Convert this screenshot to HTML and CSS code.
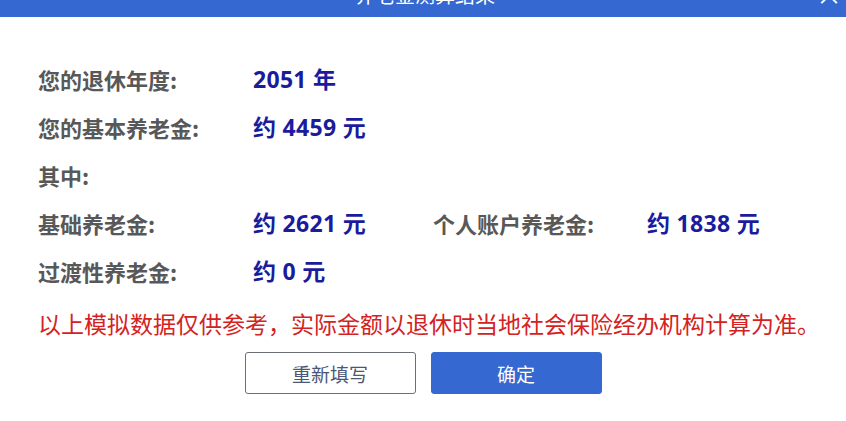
FILE: index.html
```html
<!DOCTYPE html>
<html lang="zh">
<head>
<meta charset="utf-8">
<link rel="stylesheet" href="styles.css">
</head>
<body>
<div class="dialog">
  <div class="header">
    <div class="title">养老金测算结果</div>
    <div class="close">×</div>
  </div>
  <div class="content">
    <div class="row">
      <div class="label">您的退休年度:</div>
      <div class="value">2051 年</div>
    </div>
    <div class="row">
      <div class="label">您的基本养老金:</div>
      <div class="value">约 4459 元</div>
    </div>
    <div class="row">
      <div class="label">其中:</div>
    </div>
    <div class="row">
      <div class="label">基础养老金:</div>
      <div class="value">约 2621 元</div>
      <div class="label">个人账户养老金:</div>
      <div class="value">约 1838 元</div>
    </div>
    <div class="row">
      <div class="label">过渡性养老金:</div>
      <div class="value">约 0 元</div>
    </div>
    <div class="note">以上模拟数据仅供参考，实际金额以退休时当地社会保险经办机构计算为准。</div>
  </div>
  <div class="actions">
    <button class="btn btn-reset">重新填写</button>
    <button class="btn btn-ok">确定</button>
  </div>
</div>
</body>
</html>
```
FILE: styles.css
```css
html, body {
  margin: 0;
  padding: 0;
  background: #ffffff;
}
body {
  width: 846px;
  height: 421px;
  overflow: hidden;
  font-family: "Noto Sans CJK SC", "Noto Sans", sans-serif;
}
.dialog {
  display: flex;
  flex-direction: column;
}
.header {
  position: relative;
  height: 17px;
  overflow: hidden;
  background: #3568d0;
  display: flex;
  justify-content: center;
}
.title {
  color: #ffffff;
  font-size: 20px;
  line-height: 20px;
  margin-top: -15px;
  padding-left: 4px;
}
.close {
  position: absolute;
  right: 4px;
  top: -16px;
  color: #ffffff;
  font-size: 26px;
  line-height: 20px;
}
.content {
  padding: 38px 0 0 38px;
}
.row {
  display: grid;
  grid-template-columns: 215px 180px 214px auto;
  height: 48px;
  align-items: center;
}
.label {
  color: #585858;
  font-weight: bold;
  font-size: 22px;
  line-height: 30px;
}
.value {
  color: #1b1b9e;
  font-family: "Open Sans", "Noto Sans CJK SC", sans-serif;
  font-weight: bold;
  font-size: 23px;
  line-height: 30px;
  letter-spacing: 0.3px;
}
.note {
  margin-top: 13px;
  color: #d42222;
  font-size: 23px;
  line-height: 30px;
  white-space: nowrap;
}
.actions {
  display: flex;
  justify-content: center;
  gap: 15px;
  margin-top: 14px;
}
.btn {
  width: 171px;
  height: 42px;
  border-radius: 3px;
  font-family: "Noto Sans CJK SC", sans-serif;
  font-size: 19px;
  padding: 0;
}
.btn-reset {
  background: #ffffff;
  border: 1px solid #6b6f78;
  color: #4b5875;
}
.btn-ok {
  background: #3568d0;
  border: 1px solid #3568d0;
  color: #ffffff;
}
```
